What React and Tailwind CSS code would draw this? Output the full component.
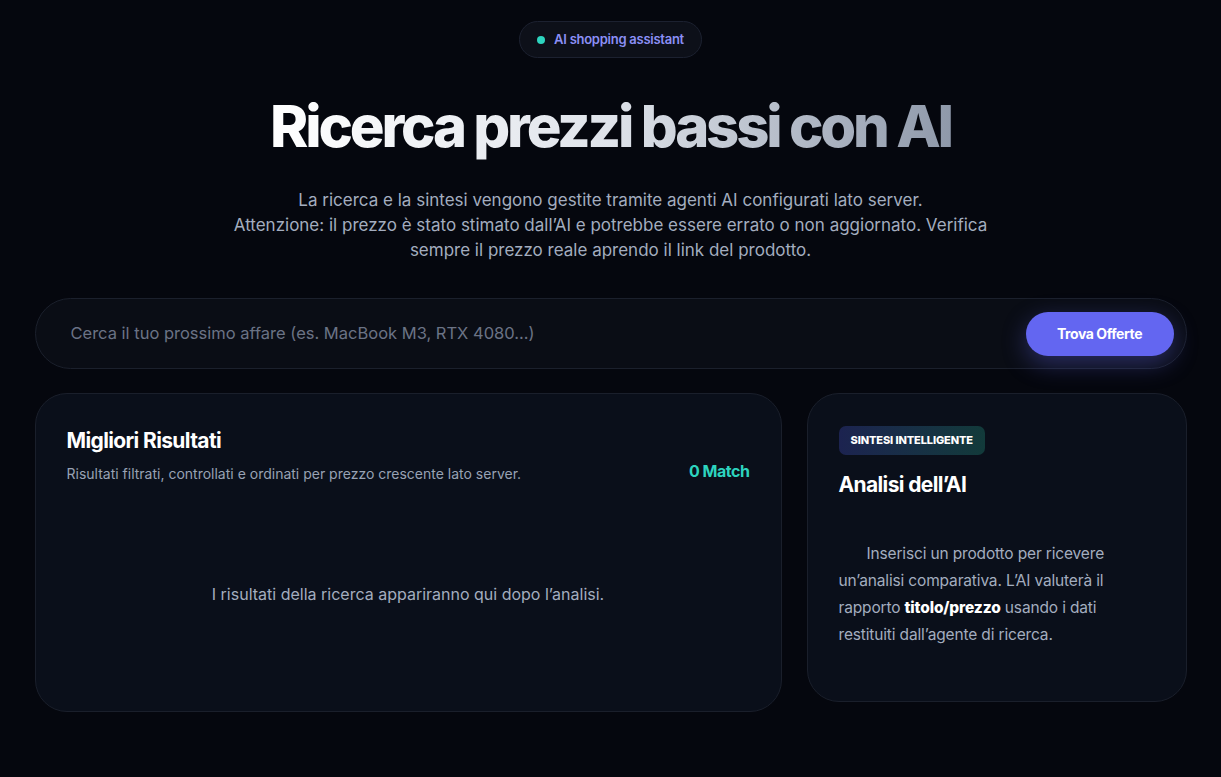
import React, { useState } from "react";

const font = { fontFamily: "Inter, 'Noto Sans', sans-serif" };

const App = () => {
  const [query, setQuery] = useState("");

  return (
    <div
      className="min-h-[777px] w-full bg-[#05070e] text-white"
      style={font}
    >
      <div className="mx-auto flex max-w-[1152px] flex-col items-center pt-[21px]">
        {/* badge */}
        <div className="flex h-[37px] items-center gap-[9px] rounded-full border border-[#1c2130] bg-[#0d1019] px-[17px]">
          <span className="h-[8px] w-[8px] rounded-full bg-[#2dd4bf]" />
          <span className="text-[13px] font-semibold tracking-[-0.02em] text-[#8b8ff5]">
            AI shopping assistant
          </span>
        </div>

        <h1 className="mt-[26px] bg-gradient-to-r from-white via-[#dfe3ea] to-[#8f99aa] bg-clip-text text-[58px] font-extrabold leading-[84px] tracking-[-0.055em] text-transparent">
          Ricerca prezzi bassi con AI
        </h1>

        <p className="mt-[20px] max-w-[770px] text-center text-[17px] leading-[25px] text-[#a3adbf]">
          La ricerca e la sintesi vengono gestite tramite agenti AI configurati lato server.
          <br />
          Attenzione: il prezzo è stato stimato dall’AI e potrebbe essere errato o non aggiornato. Verifica
          sempre il prezzo reale aprendo il link del prodotto.
        </p>

        {/* search */}
        <div className="mt-[35px] flex h-[71px] w-full items-center rounded-full border border-[#1b202c] bg-[#0a0d15] pl-[35px] pr-[12px]">
          <input
            value={query}
            onChange={(e) => setQuery(e.target.value)}
            placeholder="Cerca il tuo prossimo affare (es. MacBook M3, RTX 4080...)"
            className="flex-1 bg-transparent text-[16.5px] text-white outline-none placeholder:text-[#6b7385]"
          />
          <button className="h-[44px] w-[148px] rounded-full bg-[#6366f1] text-[14px] font-bold tracking-[-0.03em] text-white shadow-[0_8px_24px_rgba(99,102,241,0.35)]">
            Trova Offerte
          </button>
        </div>

        {/* content */}
        <div className="mt-[24px] grid w-full grid-cols-[minmax(0,1fr)_380px] items-start gap-[25px]">
          <div className="flex h-[319px] flex-col rounded-[32px] border border-[#1a1f2b] bg-[#0a0f1a] px-[31px] pt-[33px]">
            <div className="flex items-end justify-between">
              <div>
                <h2 className="text-[21px] font-bold leading-[28px] tracking-[-0.03em] text-white">
                  Migliori Risultati
                </h2>
                <p className="mt-[8px] text-[14px] text-[#98a2b4]">
                  Risultati filtrati, controllati e ordinati per prezzo crescente lato server.
                </p>
              </div>
              <span className="mb-[1px] text-[16px] font-bold tracking-[-0.03em] text-[#2dd4bf]">
                0 Match
              </span>
            </div>
            <div className="flex flex-1 items-center justify-center pb-[8px]">
              <p className="text-[16px] text-[#a3adbf]">
                I risultati della ricerca appariranno qui dopo l’analisi.
              </p>
            </div>
          </div>

          <div className="h-[309px] rounded-[32px] border border-[#1a1f2b] bg-[#0a0f1a] px-[31px] pt-[32px]">
            <span className="inline-block rounded-[7px] bg-gradient-to-r from-[#1c2350] to-[#123a3a] px-[12px] py-[6px] text-[11px] font-extrabold tracking-[-0.01em] text-white">
              SINTESI INTELLIGENTE
            </span>
            <h3 className="mt-[14px] text-[21px] font-bold tracking-[-0.03em] text-white">
              Analisi dell’AI
            </h3>
            <p className="mt-[40px] indent-[28px] text-[15.5px] leading-[27px] tracking-[-0.01em] text-[#a3adbf]">
              Inserisci un prodotto per ricevere un’analisi comparativa. L’AI valuterà il rapporto{" "}
              <strong className="font-extrabold text-white">titolo/prezzo</strong>{" "}
              usando i dati restituiti dall’agente di ricerca.
            </p>
          </div>
        </div>
      </div>
    </div>
  );
};

export default App;
